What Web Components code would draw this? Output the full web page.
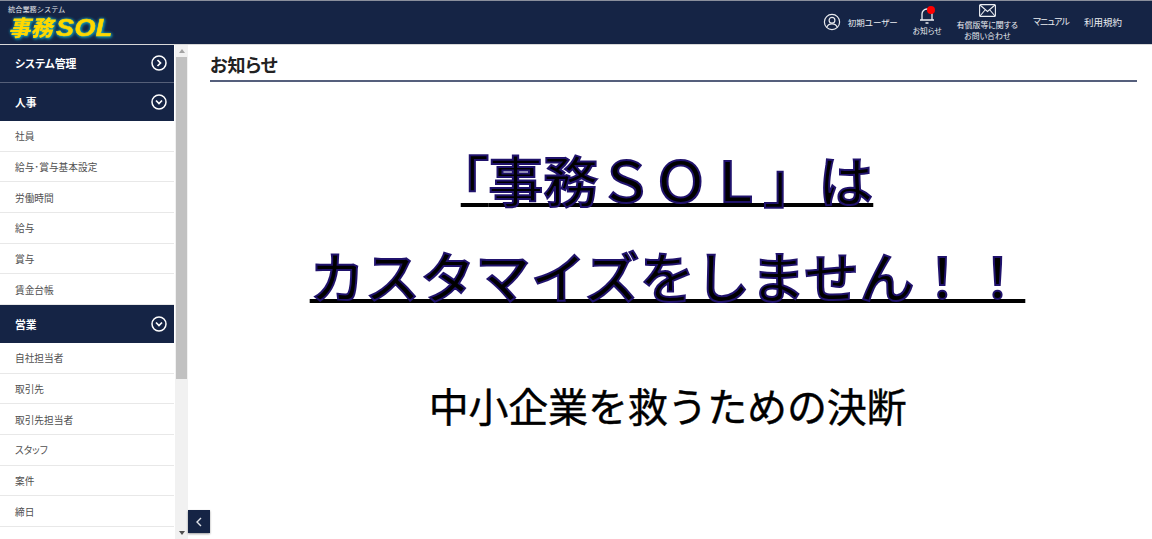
<!DOCTYPE html>
<html lang="ja"><head><meta charset="utf-8"><title>お知らせ</title>
<style>
html,body{margin:0;height:100%;overflow:hidden;background:#fff}
body{font-family:"Noto Sans CJK JP","Noto Sans",sans-serif;display:flex;flex-direction:column;height:539px;font-feature-settings:"palt"}
.body-row{display:flex;flex:1;min-height:0}
</style></head><body>
<template id="t-header"><style>
:host{display:flex;align-items:stretch;height:45px;box-sizing:border-box;background:#152445;border-top:1px solid #8a8f9c;border-bottom:1px solid #d8d8d8;color:#fff;flex:none}
.logo{width:120px;padding:4px 0 0 8px;box-sizing:border-box;flex:none;overflow:hidden}
.sub{font:7.200px/9px "Liberation Sans","Noto Sans CJK JP",sans-serif;color:#e4e6ea;white-space:nowrap}
.brand{display:flex;align-items:baseline;margin-left:2px;margin-top:2px;height:24px;color:#ffd800;white-space:nowrap;filter:drop-shadow(0 0 1.500px #16a6bd) drop-shadow(1px 1px 1px #137e9a)}
.kanji{display:inline-block;font:900 22px/24px "Liberation Sans","Noto Sans CJK JP",sans-serif;transform:skewX(-14deg);letter-spacing:.6px}
.latin{display:inline-block;font:italic 700 23px/24px "Liberation Sans",sans-serif;transform:scaleX(1.17);transform-origin:left center;letter-spacing:.4px;margin-left:1px;-webkit-text-stroke:.5px #ffd800}
.sp{flex:1}
.nav{display:flex;align-items:flex-start;font-size:8.500px;color:#eceef2;padding-right:30px;gap:15px}
.user{display:flex;align-items:center;gap:7px;height:42px;white-space:nowrap}
.user svg{display:block}
.stack{display:flex;flex-direction:column;align-items:center;font-size:7.900px;line-height:11px;white-space:nowrap}
.bell{padding-top:6px;position:relative;font-size:7.700px}
.bell i{position:absolute;width:8px;height:8px;border-radius:50%;background:#f00;top:5px;left:14.700px}
.bell svg{display:block;margin-bottom:1px}
.mail{padding-top:3px}
.mail svg{display:block;margin-bottom:2px}
.link{height:42px;line-height:42px;white-space:nowrap}
.m{font-size:9px;letter-spacing:-.9px}
.r{font-size:9.500px}
</style>
<div class="logo"><div class="sub"><slot name="sub"></slot></div><div class="brand"><span class="kanji"><slot name="kanji"></slot></span><span class="latin"><slot name="latin"></slot></span></div></div>
<div class="sp"></div>
<nav class="nav">
<div class="user"><svg width="18" height="18" viewBox="0 0 18 18" fill="none" stroke="#e8eaee" stroke-width="1.2"><circle cx="9" cy="9" r="7.600"/><circle cx="9" cy="7.200" r="2.900"/><path d="M3.900 14.200c.6-2.400 2.600-3.400 5.100-3.400s4.500 1 5.100 3.400"/></svg><span>初期ユーザー</span></div>
<div class="stack bell"><svg width="16" height="17" viewBox="0 0 16 17" fill="none" stroke="#eceef2" stroke-width="1.300"><path d="M1 13h14M3 13V7a5 5 0 0 1 10 0v6"/><path d="M6.500 16h3" stroke-width="1.500"/></svg><i></i><span>お知らせ</span></div>
<div class="stack mail"><svg width="17" height="13" viewBox="0 0 17 13" fill="none" stroke="#eceef2" stroke-width="1.100"><rect x=".6" y=".6" width="15.800" height="11.800" rx="1"/><path d="M1 1l7.500 6.500L16 1M1 12l5.500-6.500M16 12l-5.500-6.500"/></svg><span>有償版等に関する</span><span>お問い合わせ</span></div>
<div class="link m">マニュアル</div>
<div class="link r">利用規約</div>
</nav></template>

<template id="t-sidebar"><style>
:host{display:flex;flex:none;width:188px;height:100%;overflow:hidden;position:relative}
.list{width:175px;flex:none;overflow:hidden}
.bar{width:13px;flex:none;background:#f1f1f1;display:flex;flex-direction:column;align-items:center;box-sizing:border-box}
.up,.down{height:12px;flex:none;display:flex;align-items:center;justify-content:center}
.up i{border:3.500px solid transparent;border-top:0;border-bottom:4px solid #a3a3a3}
.down i{border:3.500px solid transparent;border-bottom:0;border-top:4px solid #505050}
.thumb{width:11px;height:322px;background:#c1c1c1;flex:none}
.fill{flex:1}
</style><div class="list"><slot></slot></div>
<div class="bar"><div class="up"><i></i></div><div class="thumb"></div><div class="fill"></div><div class="down"><i></i></div></div></template>

<template id="t-group"><style>
:host{display:flex;align-items:center;justify-content:space-between;box-sizing:border-box;height:38px;background:#152445;color:#fff;font-size:10.800px;font-weight:700;padding:0 7px 0 15px;width:174px;border-bottom:1px solid #555f78}
:host([last]){border-bottom:0}
:host([closed]){padding-bottom:1px}
svg{display:block}
</style><span><slot></slot></span>
<svg width="16" height="16" viewBox="0 0 16 16" fill="none" stroke="#fff" stroke-width="1.500"><circle cx="8" cy="8" r="7"/><path id="p" d="M5 6.500l3 3 3-3" stroke-width="1.700"/></svg></template>

<template id="t-row"><style>
:host{display:flex;align-items:center;box-sizing:border-box;height:30.670px;width:174px;padding:1px 0 0 15px;font-size:9.700px;color:#505050;background:#fff;border-bottom:1px solid #e8e8e8;white-space:nowrap}
</style><slot></slot></template>

<template id="t-notice"><style>
:host{display:block;flex:1;min-width:0;padding:8px 15px 0 22px;box-sizing:border-box;position:relative;color:#000}
h2{margin:0;font-size:18px;line-height:22px;font-weight:700;color:#222;border-bottom:2px solid #555f7c;height:29px;box-sizing:border-box}
.content{text-align:center;margin-right:12px}
.l{display:block;font-size:55px;line-height:96px;font-weight:500;color:#000;-webkit-text-stroke:2px #20126c;white-space:nowrap;font-feature-settings:normal;letter-spacing:.3px}
.l.a{letter-spacing:0;padding-right:1px}
.l u{text-decoration:underline;text-decoration-color:#000;text-decoration-thickness:4px;text-underline-offset:1px;text-decoration-skip-ink:none}
.a{margin-top:48px}
.br{font-feature-settings:"palt"}
.s{font-size:40px;line-height:56px;margin-top:55px;font-weight:400;-webkit-text-stroke:.4px #000;white-space:nowrap;letter-spacing:-.2px;font-feature-settings:normal}
.btn{position:absolute;left:0;top:465px;width:22px;height:23px;background:#152445;display:flex;align-items:center;justify-content:center;box-shadow:0 1px 2px rgba(0,0,0,.4)}
</style><h2><slot name="title"></slot></h2>
<div class="content"><span class="l a"><u><span class="br">「</span>事務ＳＯＬ」は</u></span><span class="l"><u><slot name="l2"></slot></u></span><div class="s"><slot name="l3"></slot></div></div>
<div class="btn"><svg width="8" height="10" viewBox="0 0 8 10" fill="none" stroke="#dfe2e8" stroke-width="1.400"><path d="M6 1L2 5l4 4"/></svg></div></template>

<script>
function def(name,tid){customElements.define(name,class extends HTMLElement{constructor(){super();this.attachShadow({mode:'open'}).appendChild(document.getElementById(tid).content.cloneNode(true));}});}
def('app-header','t-header');
def('side-bar','t-sidebar');
customElements.define('menu-group',class extends HTMLElement{constructor(){super();this.attachShadow({mode:'open'}).appendChild(document.getElementById('t-group').content.cloneNode(true));}connectedCallback(){if(this.hasAttribute('closed'))this.shadowRoot.getElementById('p').setAttribute('d','M6.500 5l3 3-3 3');}});
def('menu-row','t-row');
def('notice-panel','t-notice');
</script>

<app-header><span slot="sub">統合業務システム</span><span slot="kanji">事務</span><span slot="latin">SOL</span></app-header>
<div class="body-row">
<side-bar>
<menu-group closed>システム管理</menu-group>
<menu-group last>人事</menu-group>
<menu-row>社員</menu-row><menu-row>給与･賞与基本設定</menu-row><menu-row>労働時間</menu-row><menu-row>給与</menu-row><menu-row>賞与</menu-row><menu-row>賃金台帳</menu-row>
<menu-group last>営業</menu-group>
<menu-row>自社担当者</menu-row><menu-row>取引先</menu-row><menu-row>取引先担当者</menu-row><menu-row>スタッフ</menu-row><menu-row>案件</menu-row><menu-row>締日</menu-row>
</side-bar>
<notice-panel><span slot="title">お知らせ</span><span slot="l2">カスタマイズをしません！！</span><span slot="l3">中小企業を救うための決断</span></notice-panel>
</div>
</body></html>
